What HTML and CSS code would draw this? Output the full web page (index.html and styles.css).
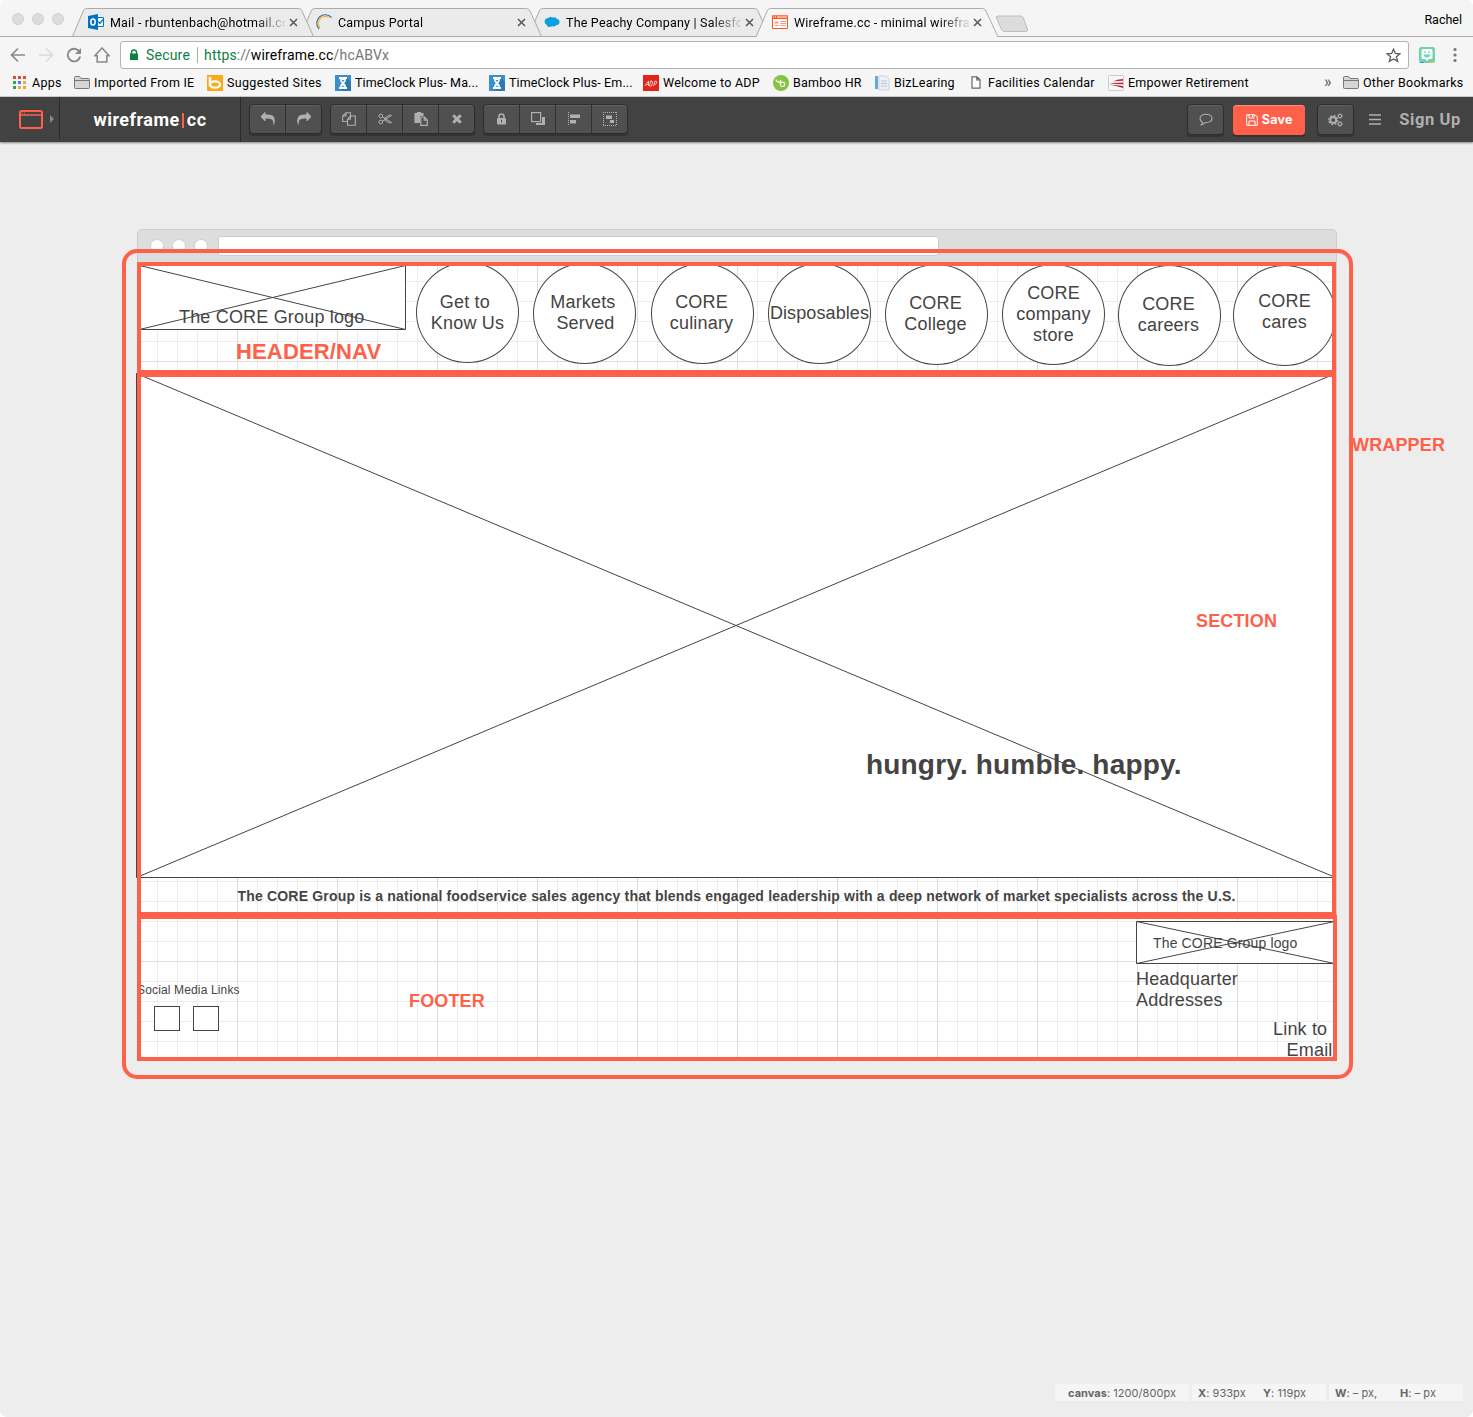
FILE: index.html
```html
<!DOCTYPE html>
<html lang="en">
<head>
<meta charset="utf-8">
<title>Wireframe.cc - minimal wireframing tool</title>
<link rel="stylesheet" href="styles.css">
</head>
<body>
<svg class="defs" aria-hidden="true">
  <symbol id="tab-shape" viewBox="0 0 242 29"><path d="M.5 28.500 11.200 3Q12.200.5 14.500.5H226.500Q229 .5 230 3L241.500 28.500Z"/></symbol>
  <symbol id="tab-open" viewBox="0 0 242 29"><path d="M0 29 11.200 3Q12.200.5 14.500.5H226.500Q229 .5 230 3L242 29"/></symbol>
  <symbol id="close" viewBox="0 0 9 9"><path d="M1 1 8 8M8 1 1 8" stroke="#5a5a5a" stroke-width="1.6"/></symbol>
  <symbol id="folder" viewBox="0 0 16 13"><path d="M.5 11.500V1.500Q.5.5 1.500.5H5.500L7 2.500H14.500Q15.500 2.500 15.500 3.500V11.500Q15.500 12.500 14.500 12.500H1.500Q.5 12.500.5 11.500Z" fill="#d6d6d6" stroke="#777"/><path d="M1 4.500H15" stroke="#777"/></symbol>
  <symbol id="hourglass" viewBox="0 0 16 16"><path d="M0 0H16V16H0Z" fill="#3a90cc"/><path d="M11 2 16 7V16H7L4 13Z" fill="#2c79b0"/><path d="M4 2H12V4H11Q11 7 9 8 11 9 11 12H12V14H4V12H5Q5 9 7 8 5 7 5 4H4Z" fill="#fff"/><path d="M6.500 5H9.500L8 7ZM6.500 12 8 10.500 9.500 12Z" fill="#3a90cc"/></symbol>
  <symbol id="undo" viewBox="0 0 1792 1792"><path fill="currentColor" d="M1792 1120q0 166-127 451-3 7-10.500 24t-13.500 30-13 22q-12 17-28 17-15 0-23.500-10t-8.500-25q0-9 2.500-26.500t2.500-23.500q5-68 5-123 0-112-19.500-200.500t-54.500-153.500-90-109.500-125-74.500-146-44.500-160-20.500-171-5.500h-224v256q0 26-19 45t-45 19-45-19l-512-512q-19-19-19-45t19-45l512-512q19-19 45-19t45 19 19 45v256h224q713 0 875 403 53 134 53 333z"/></symbol>
</svg>

<header class="chrome">
  <div class="tabstrip">
    <div class="lights"><i></i><i></i><i></i></div>
    <div class="tab t1">
      <svg class="shape"><use href="#tab-shape"/></svg>
      <svg class="fav" viewBox="0 0 16 16"><path d="M8 3.500H15.500V12.500H8Z" fill="#fff" stroke="#0072c6"/><path d="M10.500 7.500 12 9.500 15 5.500" fill="none" stroke="#0072c6" stroke-width="1.300"/><path d="M0 2 10 0V16L0 14Z" fill="#0072c6"/><ellipse cx="5" cy="8" rx="2.200" ry="2.900" fill="none" stroke="#fff" stroke-width="1.500"/></svg>
      <span class="title">Mail - rbuntenbach@hotmail.com</span>
      <svg class="x"><use href="#close"/></svg>
    </div>
    <div class="tab t2">
      <svg class="shape"><use href="#tab-shape"/></svg>
      <svg class="fav" viewBox="0 0 16 16"><path d="M3 15A8 8 0 0 1 15.500 3.500" fill="none" stroke="#3d6d9c" stroke-width="1.200"/><path d="M4 14A7 7 0 0 1 13 3.500" fill="none" stroke="#f0b840" stroke-width="1.300"/></svg>
      <span class="title">Campus Portal</span>
      <svg class="x"><use href="#close"/></svg>
    </div>
    <div class="tab t3">
      <svg class="shape"><use href="#tab-shape"/></svg>
      <svg class="fav" viewBox="0 0 16 16"><g fill="#0b9fdf"><circle cx="4" cy="7.500" r="3.300"/><circle cx="6.500" cy="6" r="3"/><circle cx="10" cy="6.300" r="3"/><circle cx="12.500" cy="8" r="3"/><circle cx="9.500" cy="9.500" r="3"/><circle cx="5.500" cy="10" r="3"/></g></svg>
      <span class="title">The Peachy Company | Salesforce</span>
      <svg class="x"><use href="#close"/></svg>
    </div>
    <div class="tab active">
      <svg class="shape"><use href="#tab-open"/></svg>
      <svg class="fav" viewBox="0 0 16 16"><path d="M.5 2H15.500V14.500H.5Z" fill="#fff" stroke="#ff5722"/><path d="M0 1.500H16V5H0Z" fill="#ff5722"/><path d="M1 3H2M3 3H4M5 3H15" stroke="#fff"/><path d="M2.500 7.500H6.500V9.500H2.500Z" fill="#ff9b7c"/><path d="M8 7.500H14M8 9.500H14M2.500 11.500H6.500M8 11.500H14" stroke="#ff9b7c"/></svg>
      <span class="title">Wireframe.cc - minimal wireframing</span>
      <svg class="x"><use href="#close"/></svg>
    </div>
    <svg class="newtab" viewBox="0 0 34 18"><path d="M3 1H25.500Q27.500 1 28.300 3L32.500 14Q33.200 16.500 31 16.500H9.500Q7.500 16.500 6.500 14.500L1.500 3Q1 1 3 1Z" fill="#dcdcdc" stroke="#bdbdbd"/></svg>
    <span class="profile">Rachel</span>
  </div>

  <div class="navbar">
    <svg width="16" height="16" viewBox="0 0 16 16"><path d="M15 8H2M8 1.500 1.500 8 8 14.500" fill="none" stroke="#8a8a8a" stroke-width="1.700"/></svg>
    <svg width="16" height="16" viewBox="0 0 16 16"><path d="M1 8H14M8 1.500 14.500 8 8 14.500" fill="none" stroke="#dadada" stroke-width="1.700"/></svg>
    <svg width="16" height="16" viewBox="0 0 16 16"><path d="M13.300 4.500A6.300 6.300 0 1 0 14.200 9.500" fill="none" stroke="#8a8a8a" stroke-width="1.900"/><path d="M15 1V7H9Z" fill="#8a8a8a"/></svg>
    <svg width="16" height="16" viewBox="0 0 16 16"><path d="M8 1 .8 8.800H3.200V15H12.800V8.800H15.200Z" fill="none" stroke="#8a8a8a" stroke-width="1.600"/></svg>
    <div class="omnibox">
      <svg width="8" height="12" viewBox="0 0 8 12"><path d="M0 4.500H8V11H0Z" fill="#0b8043"/><path d="M1.500 5V3.300Q1.500 1 4 1T6.500 3.300V5" fill="none" stroke="#0b8043" stroke-width="1.400"/></svg>
      <span class="secure">Secure</span>
      <span class="url"><b>https</b>://<em>wireframe.cc</em>/hcABVx</span>
      <svg class="star" width="15" height="15" viewBox="0 0 15 15"><path d="M7.500 1.200 9.300 5.500 14 5.800 10.400 8.800 11.600 13.400 7.500 10.900 3.400 13.400 4.600 8.800 1 5.800 5.700 5.500Z" fill="none" stroke="#5a5a5a" stroke-width="1.300"/></svg>
    </div>
    <svg class="bit" width="16" height="16" viewBox="0 0 16 16"><rect width="16" height="16" rx="2.500" fill="#6fd3ae"/><path d="M4 2H12Q13.500 2 13.500 3.500V10.500Q13.500 12 12 12H10L8 14 6 12H4Q2.500 12 2.500 10.500V3.500Q2.500 2 4 2Z" fill="#fff"/><path d="M6 4V6M10 4V6" stroke="#6fd3ae" stroke-width="1.300"/><path d="M4.500 7.500H11.500Q10.800 10.500 8 10.500T4.500 7.500Z" fill="#6fd3ae"/><path d="M1 15.500H5" stroke="#4a90d9"/><path d="M10 15.500H15" stroke="#f5b547"/></svg>
    <svg class="kebab" width="4" height="16" viewBox="0 0 4 16" fill="#777"><circle cx="2" cy="2.500" r="1.600"/><circle cx="2" cy="8" r="1.600"/><circle cx="2" cy="13.500" r="1.600"/></svg>
  </div>

  <nav class="bookmarks">
    <a class="apps"><svg width="14" height="14" viewBox="0 0 14 14"><path d="M1 0H4V3H1ZM6 0H9V3H6ZM11 0H14V3H11Z" fill="#e8453c"/><path d="M1 5H4V8H1ZM1 10H4V13H1Z" fill="#31a354"/><path d="M6 5H9V8H6Z" fill="#3a84f0"/><path d="M11 5H14V8H11ZM6 10H9V13H6ZM11 10H14V13H11Z" fill="#f6a52d"/></svg>Apps</a>
    <a><svg width="16" height="13"><use href="#folder"/></svg>Imported From IE</a>
    <a class="loose"><svg width="16" height="16" viewBox="0 0 16 16"><path d="M0 0H16V16H0Z" fill="#fba919"/><path d="M3 2V11" stroke="#fff" stroke-width="2.500"/><ellipse cx="8" cy="9.500" rx="5" ry="3.200" fill="none" stroke="#fff" stroke-width="2.300"/></svg>Suggested Sites</a>
    <a class="tight"><svg width="16" height="16"><use href="#hourglass"/></svg>TimeClock Plus- Ma...</a>
    <a class="tight"><svg width="16" height="16"><use href="#hourglass"/></svg>TimeClock Plus- Em...</a>
    <a><svg width="16" height="16" viewBox="0 0 16 16"><path d="M0 0H16V16H0Z" fill="#e1251b"/><path d="M2 11 5.500 6V11M3.500 9.500H5.500M7.500 6H9Q10.500 8 8.500 11H6.500ZM10.500 11 12 6Q14.500 6 13.500 8T11.500 9" fill="none" stroke="#fff" stroke-opacity=".8" stroke-width=".9"/></svg>Welcome to ADP</a>
    <a><svg width="16" height="16" viewBox="0 0 16 16"><circle cx="8" cy="8" r="8" fill="#82c341"/><path d="M7.500 5V9.500M3 4.500Q3.500 7.500 7 7" fill="none" stroke="#fff" stroke-width="1.300"/><circle cx="9.500" cy="9.300" r="2.200" fill="none" stroke="#fff" stroke-width="1.200"/></svg>Bamboo HR</a>
    <a><svg width="16" height="16" viewBox="0 0 16 16"><path d="M1 1H4V14H1Z" fill="#64a7dc"/><path d="M5 1H12L15 4V15H5Z" fill="#edf0f4" stroke="#ccd2da"/><path d="M7 6H13M7 8.500H13M7 11H13" stroke="#bcc6d2"/></svg>BizLearing</a>
    <a class="page"><svg width="10" height="13" viewBox="0 0 10 13"><path d="M1 .8H6L9 3.800V12.200H1ZM5.800 1V4H9" fill="#fff" stroke="#666" stroke-width="1.200"/></svg>Facilities Calendar</a>
    <a><svg width="16" height="16" viewBox="0 0 16 16"><rect x=".5" y=".5" width="15" height="15" rx="1" fill="#f7f7f7" stroke="#ccc"/><path d="M5 6.500Q9 4 15 4V5.800Q9 5.800 5 6.500ZM1 9.200Q6 7.500 15 7.500V9.200Q8 9 1 9.200ZM3 10Q10 10 15 11V13Q9 10.800 3 10Z" fill="#c8203c"/></svg>Empower Retirement</a>
    <span class="more">»</span>
    <a><svg width="16" height="13"><use href="#folder"/></svg>Other Bookmarks</a>
  </nav>
</header>

<div class="appbar">
  <div class="device">
    <svg width="24" height="19" viewBox="0 0 24 19"><rect x="1" y="1" width="22" height="17" rx="1.500" fill="none" stroke="#ff604a" stroke-width="2"/><path d="M2 5H22" stroke="#ff604a" stroke-width="1.500"/><path d="M3 3H7" stroke="#ff604a" stroke-dasharray="1 1"/></svg>
    <svg width="4" height="8" viewBox="0 0 4 8"><path d="M0 0 4 4 0 8Z" fill="#888"/></svg>
  </div>
  <div class="brand">wireframe<i></i>cc</div>
  <div class="group">
    <button><svg width="14" height="14"><use href="#undo"/></svg></button>
    <button><svg class="flip" width="14" height="14"><use href="#undo"/></svg></button>
  </div>
  <div class="group">
    <button><svg width="14" height="14" viewBox="0 0 14 14" fill="#505050" stroke="currentColor" stroke-width="1.100"><path d="M4 .7H8.500V9.500H.7V4ZM4 .7V4H.7"/><path d="M8.500 4H13.300V13.300H5.500V7.200ZM8.500 4V7.200H5.500"/></svg></button>
    <button><svg width="14" height="14" viewBox="0 0 14 14" fill="none" stroke="currentColor" stroke-width="1"><circle cx="2.800" cy="4" r="1.900"/><circle cx="2.800" cy="10" r="1.900"/><path d="M4.500 5 13.500 10.500 11.500 11 6 7.500M4.500 9 13.500 3.500 11.500 3 6 6.500"/></svg></button>
    <button><svg width="14" height="14" viewBox="0 0 14 14"><path d="M.5 1H3V0H7V1H9.500V4H6V11H.5Z" fill="currentColor"/><path d="M6.800 5H10.500L13.300 8V13.300H6.800ZM10.200 5V8.200H13.300" fill="#505050" stroke="currentColor" stroke-width="1.200"/></svg></button>
    <button><svg width="10" height="10" viewBox="0 0 10 10"><path d="M1.200 1.200 8.800 8.800M8.800 1.200 1.200 8.800" stroke="currentColor" stroke-width="3"/></svg></button>
  </div>
  <div class="group">
    <button><svg width="9" height="12" viewBox="0 0 9 12"><rect y="5" width="9" height="6.500" rx="1" fill="currentColor"/><path d="M2 5.500V3.500Q2 1 4.500 1T7 3.500V5.500" fill="none" stroke="currentColor" stroke-width="1.500"/><path d="M4.500 7V9.500" stroke="#505050"/></svg></button>
    <button><svg width="14" height="14" viewBox="0 0 14 14"><path d="M11 5H14V13H5V11H11Z" fill="currentColor"/><rect x=".6" y=".6" width="9" height="9" fill="none" stroke="currentColor" stroke-width="1.200"/></svg></button>
    <button><svg width="12" height="14" viewBox="0 0 12 14"><path d="M.5 0V14" stroke="currentColor" stroke-dasharray="1 1"/><path d="M2 2.500H12V6H2ZM2 8H8V11.500H2Z" fill="currentColor"/></svg></button>
    <button><svg width="14" height="14" viewBox="0 0 14 14"><path d="M0 .5H14M0 13.500H14M.5 0V14M13.500 0V14" stroke="currentColor" stroke-dasharray="1 1"/><path d="M3 3.500H9V7H3ZM7 8H11V11H7Z" fill="currentColor"/></svg></button>
  </div>
  <div class="right">
    <button class="solo"><svg width="14" height="13" viewBox="0 0 14 13"><path d="M7 1.300C3.500 1.300 1 3.200 1 5.500 1 7.200 2.200 8.500 3.500 9.200Q3.300 10.800 2.300 11.600 4.500 11.300 5.800 9.700C10 10 13 8 13 5.500 13 3.200 10.500 1.300 7 1.300Z" fill="none" stroke="currentColor" stroke-width="1.100"/></svg></button>
    <button class="save"><svg width="12" height="12" viewBox="0 0 12 12" fill="none" stroke="currentColor" stroke-width="1"><path d="M.7.7H9L11.300 3V11.300H.7ZM3 .7V4H8V.7M3 11.300V7H9V11.300M6.500 1V3"/></svg>Save</button>
    <button class="solo"><svg width="15" height="14" viewBox="0 0 15 14" fill="none" stroke="currentColor"><circle cx="5.200" cy="7" r="3" stroke-width="2"/><circle cx="5.200" cy="7" r="4.600" stroke-width="1.200" stroke-dasharray="1.800 1.810"/><circle cx="12" cy="3" r="1.600"/><circle cx="12" cy="3" r="2.400" stroke-dasharray=".9 1"/><circle cx="12" cy="11" r="1.600"/><circle cx="12" cy="11" r="2.400" stroke-dasharray=".9 1"/></svg></button>
    <svg class="menu" width="12" height="11" viewBox="0 0 12 11"><path d="M0 1H12M0 5.500H12M0 10H12" stroke="currentColor" stroke-width="1.600"/></svg>
    <a class="signup">Sign Up</a>
  </div>
</div>

<main class="board">
  <div class="frame-head"><i></i><i></i><i></i><span></span></div>
  <div class="grid"></div>

  <svg class="box logo" viewBox="0 0 267 65"><path d="M.5.5H266.500V64.500H.5ZL266.500 64.500M266.500.5.5 64.500"/></svg>
  <div class="text logo-text">The CORE Group logo</div>

  <div class="circle" style="left:416px;top:262px"><span>Get to 
Know Us</span></div>
  <div class="circle down" style="left:533px;top:263px"><span>Markets 
Served</span></div>
  <div class="circle shift" style="left:651px;top:263px"><span>CORE
culinary</span></div>
  <div class="circle wide" style="left:768px;top:263px"><span>Disposables</span></div>
  <div class="circle shift" style="left:885px;top:264px"><span>CORE
College</span></div>
  <div class="circle" style="left:1002px;top:264px"><span>CORE
company
store</span></div>
  <div class="circle shift" style="left:1118px;top:265px"><span>CORE
careers</span></div>
  <div class="circle last" style="left:1233px;top:265px"><span>CORE
cares</span></div>

  <svg class="box hero" viewBox="0 0 1200 505"><path d="M.5.5H1199.500V504.500H.5ZL1199.500 504.500M1199.500.5.5 504.500"/></svg>
  <div class="text slogan">hungry. humble. happy.</div>
  <div class="text blurb">The CORE Group is a national foodservice sales agency that blends engaged leadership with a deep network of market specialists across the U.S.</div>

  <svg class="box logo-small" viewBox="0 0 199 43"><path d="M.5.5H198.500V42.500H.5ZL198.500 42.500M198.500.5.5 42.500"/></svg>
  <div class="text logo-small-text">The CORE Group logo</div>
  <div class="text hq">Headquarter
Addresses</div>
  <div class="text email">Link to 
Email</div>
  <div class="text social">Social Media Links</div>
  <div class="square s1"></div>
  <div class="square s2"></div>

  <div class="outline wrapper"></div>
  <div class="outline o-header"></div>
  <div class="outline o-section"></div>
  <div class="outline o-footer"></div>
  <div class="label l-header">HEADER/NAV</div>
  <div class="label l-wrapper">WRAPPER</div>
  <div class="label l-section">SECTION</div>
  <div class="label l-footer">FOOTER</div>
</main>

<footer class="status">
  <div><span class="c"><b>canvas</b>: 1200/800px</span></div>
  <div><span class="p"><b>X</b>: 933px</span><span><b>Y</b>: 119px</span></div>
  <div><span class="q"><b>W</b>: – px,</span><span><b>H</b>: – px</span></div>
</footer>
</body>
</html>
```

FILE: styles.css
```css
* { box-sizing: border-box; }
html { background: #fff; }
body {
  margin: 0;
  width: 1473px;
  height: 1417px;
  display: flex;
  flex-direction: column;
  position: relative;
  overflow: hidden;
  border-radius: 7px;
  background: #ededed;
  font-family: Roboto, "Liberation Sans", sans-serif;
}
svg { display: block; flex: none; }
.defs { position: absolute; width: 0; height: 0; }

/* browser chrome */
.chrome { height: 97px; background: #f5f5f5; border-bottom: 1px solid #cfcfcf; color: #000; }
.tabstrip { height: 37px; display: flex; align-items: flex-end; border-bottom: 1px solid #ababab; }
.lights { display: flex; gap: 8px; width: 72px; padding: 0 0 11px 12px; }
.lights i { width: 12px; height: 12px; border-radius: 50%; background: #dcdcdc; border: 1px solid #d0d0d0; }
.tab {
  position: relative;
  isolation: isolate;
  width: 242px;
  height: 29px;
  flex: none;
  display: flex;
  align-items: center;
  padding: 0 0 1px 16px;
  margin: 0 -14px -1px 0;
  font-size: 12.500px;
  letter-spacing: .2px;
}
.t1 { z-index: 3; }
.t2 { z-index: 2; }
.t3 { z-index: 1; }
.tab.active { z-index: 4; margin-right: -4px; }
.shape { position: absolute; inset: 0; width: 242px; height: 29px; z-index: -1; fill: #ebebeb; stroke: #ababab; }
.active .shape { fill: #f5f5f5; }
.fav { width: 16px; height: 16px; margin-right: 6px; }
.title {
  width: 175px;
  white-space: nowrap;
  overflow: hidden;
  -webkit-mask-image: linear-gradient(90deg, #000 145px, transparent 178px);
  mask-image: linear-gradient(90deg, #000 145px, transparent 178px);
}
.x { width: 9px; height: 9px; margin: 1px 0 0 3.500px; }
.newtab { width: 34px; height: 18px; margin-bottom: 3px; position: relative; z-index: 5; margin-left: 1px; }
.profile { margin: 0 11px 9px auto; font-size: 12.500px; line-height: 14px; }

.navbar { height: 33px; display: flex; align-items: center; padding: 3px 0 0 10px; }
.navbar > svg { margin-right: 12px; }
.omnibox {
  width: 1289px;
  height: 28px;
  margin-left: -2px;
  display: flex;
  align-items: center;
  flex: none;
  background: #fff;
  border: 1px solid #b3b3b3;
  border-radius: 3px;
  padding: 0 7px 0 9px;
  font-size: 14px;
}
.secure { color: #0b8043; margin: 0 6px 0 8px; padding-right: 7px; border-right: 1px solid #aaa; line-height: 16px; letter-spacing: .2px; }
.url { color: #757575; letter-spacing: .16px; }
.url b { font-weight: 400; color: #0b8043; }
.url em { font-style: normal; color: #000; }
.star { margin-left: auto; }
.navbar > .bit { margin: 0 18px 0 10px; }
.navbar > .kebab { margin: 0; }

.bookmarks {
  height: 25px;
  display: grid;
  grid-template-columns: 62px 133px 128px 154px 154px 130px 101px 97px 137px 216px 19px auto;
  padding-left: 12px;
  font-size: 12.500px;
  letter-spacing: .25px;
  align-items: center;
  white-space: nowrap;
}
.bookmarks a { display: flex; align-items: center; gap: 4px; }
.bookmarks .apps { gap: 6px; }
.bookmarks .page { gap: 7px; }
.bookmarks .loose { letter-spacing: .33px; }
.bookmarks .tight { letter-spacing: .12px; }
.more { font-size: 16px; color: #555; padding-bottom: 3px; }

/* application toolbar */
.appbar {
  height: 45px;
  flex: none;
  display: flex;
  align-items: center;
  background: #424242;
  box-shadow: 0 1px 2px rgba(0, 0, 0, .45);
  position: relative;
  color: #b0b0b0;
}
.device { width: 60px; height: 42px; align-self: flex-start; border-right: 1px solid #2a2a2a; display: flex; align-items: center; padding-left: 19px; gap: 7px; padding-top: 2px; }
.brand { width: 181px; height: 45px; border-right: 1px solid #2a2a2a; display: flex; align-items: center; justify-content: center; color: #fff; font: 700 18px/45px Roboto, sans-serif; letter-spacing: .5px; padding-bottom: 1px; }
.brand i { width: 2px; height: 15px; background: #ff604a; margin: 2px 3px 0 2px; }
.group { display: flex; height: 30px; margin: 0 0 1px 8px; border: 1px solid #2d2d2d; border-radius: 4px; background: #505050; box-shadow: 0 2px 1px #333, inset 0 1px 0 #626262; }
button { font: inherit; color: inherit; padding: 0; margin: 0; border: 0; background: none; display: flex; align-items: center; justify-content: center; }
.group button { width: 36px; border-right: 1px solid #303030; }
.group button:last-child { border: 0; width: 35px; }
.flip { transform: scaleX(-1); }
.right { margin-left: auto; padding-right: 13px; display: flex; align-items: center; }
.solo { width: 37px; height: 31px; border: 1px solid #2d2d2d; border-radius: 4px; background: #505050; box-shadow: 0 2px 1px #333, inset 0 1px 0 #626262; }
.save { width: 72px; height: 30px; margin: 0 12px 0 9px; background: #ff604a; border-radius: 4px; color: #fff; font: 700 12.500px Inter, sans-serif; letter-spacing: .25px; gap: 4px; box-shadow: 0 2px 1px #333, inset 0 1px 0 #ff8a78; }
.menu { margin: 0 18px 0 15px; }
.signup { font-weight: 700; font-size: 16.500px; letter-spacing: .62px; margin-right: -1px; }

/* drawing canvas: page coordinates */
.board { position: absolute; inset: 0; pointer-events: none; font: 18px/21px "Liberation Sans", Arial, sans-serif; letter-spacing: .18px; color: #444; }
.board > * { position: absolute; }
.frame-head { left: 137px; top: 229px; width: 1200px; height: 34px; background: #ddd; border: 1px solid #ccc; border-radius: 5px 5px 0 0; display: flex; padding: 9px 0 0 12px; gap: 8px; }
.frame-head i { width: 14px; height: 14px; border-radius: 50%; background: #fff; border: 1px solid #d0d0d0; }
.frame-head span { width: 721px; height: 20px; margin: -3px 0 0 2px; background: #fff; border: 1px solid #ccc; border-radius: 3px; }
.grid {
  left: 137px;
  top: 262px;
  width: 1200px;
  height: 799px;
  background-color: #fff;
  background-image:
    linear-gradient(90deg, #ddd 1px, transparent 1px),
    linear-gradient(#ddd 1px, transparent 1px),
    linear-gradient(90deg, #ececec 1px, transparent 1px),
    linear-gradient(#ececec 1px, transparent 1px);
  background-size: 100px 100px, 100px 100px, 20px 20px, 20px 20px;
  background-position: 0 -1px;
  border-right: 1px solid #ccc;
}
.box { fill: #fff; stroke: #444; stroke-width: 1; }
.logo { left: 139px; top: 265px; width: 267px; height: 65px; }
.hero { left: 136px; top: 373px; width: 1200px; height: 505px; }
.logo-small { left: 1136px; top: 921px; width: 199px; height: 43px; }
.text, .label { white-space: pre; }
.logo-text { left: 179px; top: 307px; }
.circle { width: 103px; height: 101px; border: 1px solid #444; border-radius: 50%; background: #fff; display: flex; align-items: center; justify-content: center; text-align: center; white-space: pre; }
.circle span { position: relative; }
.circle.shift span { left: -1px; top: -1px; }
.circle.down span { left: 1px; top: -1px; }
.circle.wide { letter-spacing: .1px; }
.circle.last span { top: -4px; }
.slogan { left: 866px; top: 748px; font: 700 28px/34px "Liberation Sans", Arial, sans-serif; letter-spacing: .18px; }
.blurb { left: 237.500px; top: 886px; font-weight: 700; font-size: 14px; }
.logo-small-text { left: 1153px; top: 933px; font-size: 14px; letter-spacing: .15px; }
.hq { left: 1136px; top: 969px; }
.email { right: 140.500px; top: 1019px; text-align: right; }
.social { left: 137px; top: 980px; font-size: 12px; letter-spacing: .15px; }
.square { top: 1006px; width: 26px; height: 25px; border: 1px solid #444; background: #fff; }
.s1 { left: 154px; }
.s2 { left: 193px; }
.outline { border: 4px solid #ff604a; }
.wrapper { left: 122px; top: 249px; width: 1231px; height: 830px; border-radius: 15px; }
.o-header { left: 137px; top: 262px; width: 1199px; height: 112px; }
.o-section { left: 137px; top: 373px; width: 1199px; height: 543px; }
.o-footer { left: 137px; top: 915px; width: 1200px; height: 146px; }
.label { color: #ff604a; font-weight: 700; letter-spacing: .15px; }
.l-header { left: 236px; top: 341px; font-size: 22px; }
.l-wrapper { left: 1352px; top: 435px; }
.l-section { left: 1196px; top: 611px; }
.l-footer { left: 409px; top: 991px; }

/* status strip */
.status { margin: auto 10px 16px auto; display: flex; gap: 3px; font: 11px/17px Inter, sans-serif; color: #666; }
.status div { width: 134px; height: 17px; background: #f5f5f5; display: flex; padding-left: 6px; padding-top: 1px; line-height: 16px; white-space: pre; letter-spacing: .05px; }
.status .c { padding-left: 7px; }
.status .p, .status .q { width: 65px; }
```
